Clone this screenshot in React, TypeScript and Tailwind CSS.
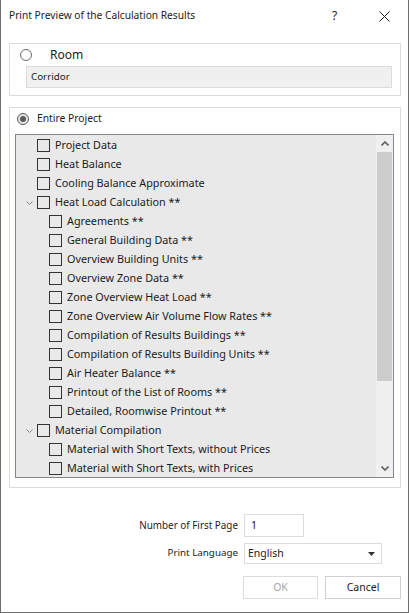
import React from "react";

type Item = { label: string; level: 0 | 1; expandable?: boolean };

const ITEMS: Item[] = [
  { label: "Project Data", level: 0 },
  { label: "Heat Balance", level: 0 },
  { label: "Cooling Balance Approximate", level: 0 },
  { label: "Heat Load Calculation **", level: 0, expandable: true },
  { label: "Agreements **", level: 1 },
  { label: "General Building Data **", level: 1 },
  { label: "Overview Building Units **", level: 1 },
  { label: "Overview Zone Data **", level: 1 },
  { label: "Zone Overview Heat Load **", level: 1 },
  { label: "Zone Overview Air Volume Flow Rates **", level: 1 },
  { label: "Compilation of Results Buildings **", level: 1 },
  { label: "Compilation of Results Building Units **", level: 1 },
  { label: "Air Heater Balance **", level: 1 },
  { label: "Printout of the List of Rooms **", level: 1 },
  { label: "Detailed, Roomwise Printout **", level: 1 },
  { label: "Material Compilation", level: 0, expandable: true },
  { label: "Material with Short Texts, without Prices", level: 1 },
  { label: "Material with Short Texts, with Prices", level: 1 },
];

function Radio({ checked }: { checked?: boolean }) {
  return (
    <svg width="12" height="12" viewBox="0 0 12 12" className="shrink-0">
      <circle cx="6" cy="6" r="5.5" fill={checked ? "#e6e6e6" : "#fff"} stroke={checked ? "#5a5a5a" : "#6a6a6a"} strokeWidth="1" />
      {checked && <circle cx="6" cy="6" r="3" fill="#5a5a5a" />}
    </svg>
  );
}

function Chevron({ up }: { up?: boolean }) {
  return (
    <svg width="8" height="5" viewBox="0 0 8 5">
      <path d={up ? "M0.5 4.5 L4 1 L7.5 4.5" : "M0.5 0.5 L4 4 L7.5 0.5"} fill="none" stroke="#606060" strokeWidth="1.6" />
    </svg>
  );
}

export default function App() {
  return (
    <div
      className="w-[409px] h-[613px] bg-white border-x border-b border-[#6e6e6e] flex flex-col text-[#1b1b1b]"
      style={{ fontFamily: '"Noto Sans", sans-serif' }}
    >
      {/* Title bar */}
      <div className="h-[32px] flex items-center pl-[8px] shrink-0">
        <span className="text-[10.2px] flex-1">Print Preview of the Calculation Results</span>
        <span className="text-[12px] w-[10px] mr-[37px]">?</span>
        <svg width="11" height="11" viewBox="0 0 11 11" className="mr-[18px]">
          <path d="M0.5 0.5 L10.5 10.5 M10.5 0.5 L0.5 10.5" stroke="#222" strokeWidth="1" />
        </svg>
      </div>

      <div className="flex-1 flex flex-col pl-[8px] pr-[7px]">
        {/* Room group */}
        <div className="mt-[11px] h-[53px] border border-[#dcdcdc] flex flex-col pl-[10px] pr-[8px]">
          <div className="flex items-center h-[20px] mt-[1px]">
            <Radio />
            <span className="ml-[18px] text-[12px]">Room</span>
          </div>
          <div className="ml-[6px] mt-[1px] h-[22px] bg-[#f0f0f0] border border-[#dcdcdc] flex items-center pl-[4px] text-[9.8px]">
            Corridor
          </div>
        </div>

        {/* Entire project group */}
        <div className="mt-[11px] h-[381px] border border-[#dcdcdc] flex flex-col pl-[5px] pr-[6px]">
          <div className="flex items-center h-[21px] pl-[2px]">
            <Radio checked />
            <span className="ml-[8px] text-[10.3px]">Entire Project</span>
          </div>
          <div className="mt-[5px] h-[344px] border border-[#828790] bg-[#e9e9e9] flex">
            <div className="flex-1 pt-[1px]">
              {ITEMS.map((it) => (
                <div key={it.label} className="h-[19px] flex items-center">
                  <div className={it.level === 0 ? "w-[21px] flex justify-end pr-[4px]" : "w-[33px]"}>
                    {it.expandable && (
                      <svg width="7" height="4" viewBox="0 0 7 4">
                        <path d="M0.5 0.5 L3.5 3.5 L6.5 0.5" fill="none" stroke="#8a8a8a" strokeWidth="1" />
                      </svg>
                    )}
                  </div>
                  <div className="w-[13px] h-[13px] border border-[#333] shrink-0" />
                  <span className="ml-[5px] text-[10.8px] whitespace-nowrap">{it.label}</span>
                </div>
              ))}
            </div>
            <div className="w-[17px] bg-[#f0f0f0] flex flex-col items-center">
              <div className="h-[17px] flex items-center justify-center">
                <Chevron up />
              </div>
              <div className="h-[229px] w-[15px] bg-[#cdcdcd]" />
              <div className="flex-1" />
              <div className="h-[17px] flex items-center justify-center">
                <Chevron />
              </div>
            </div>
          </div>
        </div>

        {/* Bottom fields */}
        <div className="mt-[26px] flex flex-col">
          <div className="flex items-center justify-end h-[23px] pr-[97px]">
            <span className="text-[9.9px] mr-[6px]">Number of First Page</span>
            <div className="w-[60px] h-[23px] border border-[#dcdcdc] flex items-center pl-[6px] text-[10.5px]">1</div>
          </div>
          <div className="mt-[6px] flex items-center justify-end h-[21px] pr-[19px]">
            <span className="text-[9.8px] mr-[6px]">Print Language</span>
            <div className="w-[138px] h-[21px] border border-[#dcdcdc] flex items-center pl-[3px] pr-[6px] text-[10.5px]">
              <span className="flex-1">English</span>
              <svg width="7" height="4" viewBox="0 0 7 4">
                <path d="M0 0 L7 0 L3.5 4 Z" fill="#333" />
              </svg>
            </div>
          </div>
          <div className="mt-[12px] flex justify-end gap-[7px]">
            <div className="w-[75px] h-[23px] border border-[#dcdcdc] flex items-center justify-center text-[10.5px] text-[#a8a8a8]">OK</div>
            <div className="w-[76px] h-[23px] border border-[#d0d0d0] flex items-center justify-center text-[10.5px]">Cancel</div>
          </div>
        </div>
      </div>
    </div>
  );
}
